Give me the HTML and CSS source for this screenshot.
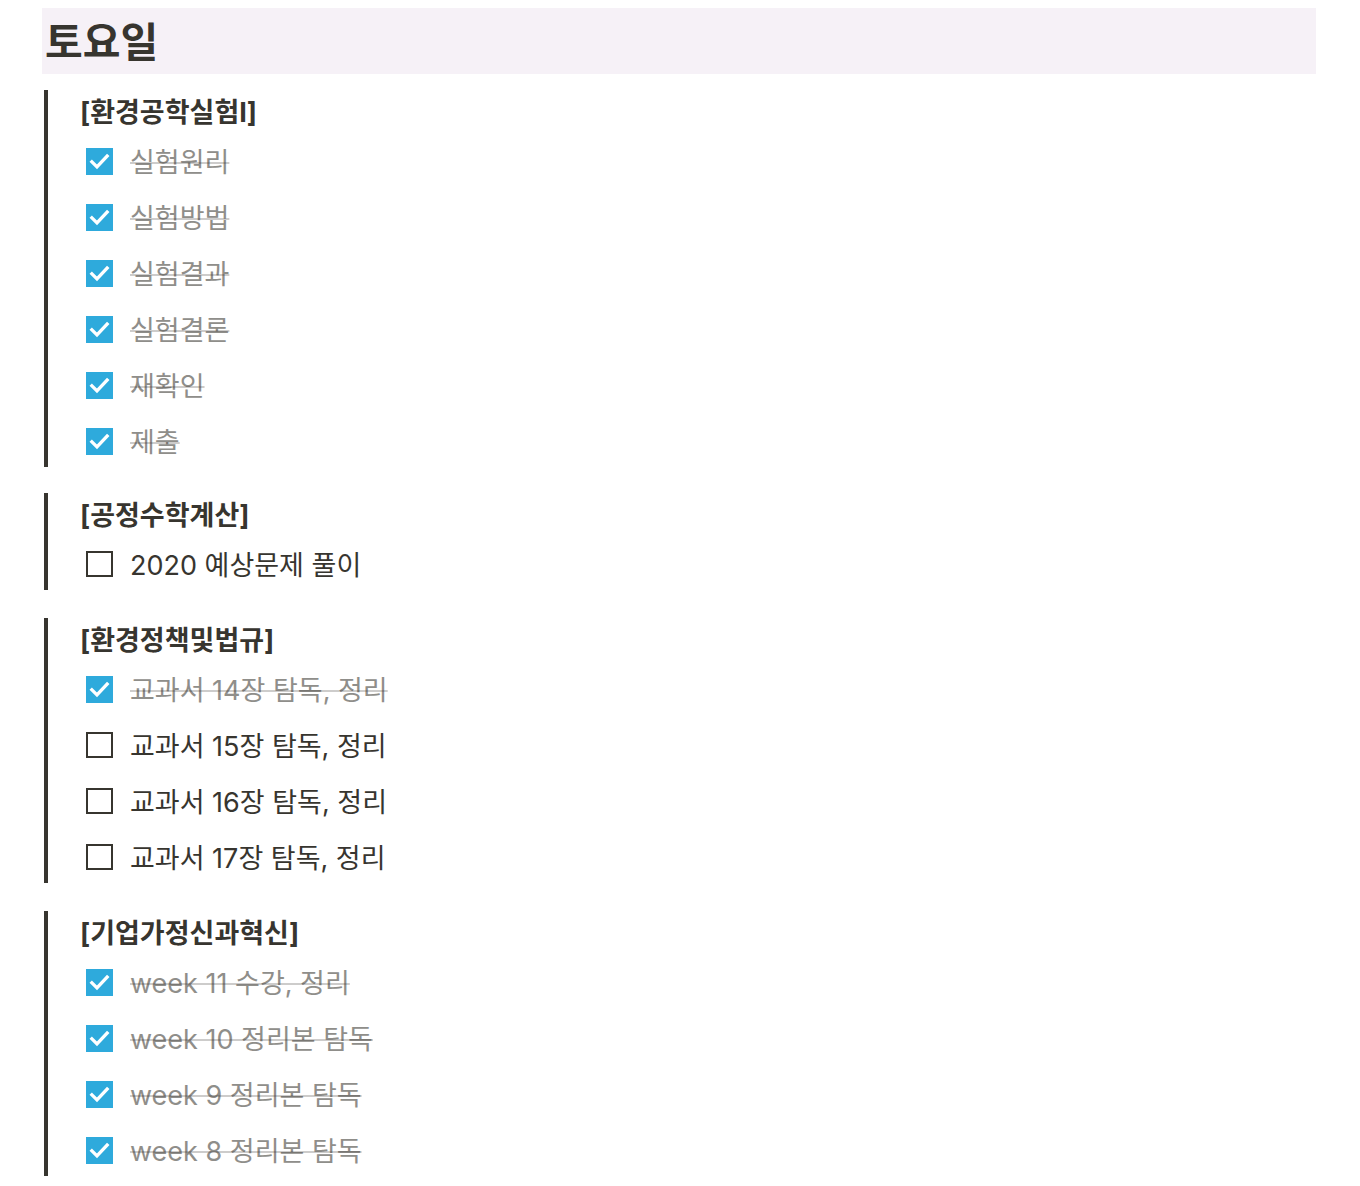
FILE: index.html
```html
<!DOCTYPE html>
<html lang="ko">
<head>
    <meta charset="UTF-8">
    <meta name="viewport" content="width=device-width, initial-scale=1.0">
    <title>토요일</title>
    <link rel="stylesheet" href="styles.css">
</head>
<body>

    <div id="root">
        <h1 class="day">토요일</h1>

        <div class="block">
            <div class="subject">[환경공학실험I]</div>
            <div class="todo done"><span class="box"><svg viewBox="0 0 16 16"><path d="M3.5 8.2l3 3 6-6.4"/></svg></span><span class="text">실험원리</span></div>
            <div class="todo done"><span class="box"><svg viewBox="0 0 16 16"><path d="M3.5 8.2l3 3 6-6.4"/></svg></span><span class="text">실험방법</span></div>
            <div class="todo done"><span class="box"><svg viewBox="0 0 16 16"><path d="M3.5 8.2l3 3 6-6.4"/></svg></span><span class="text">실험결과</span></div>
            <div class="todo done"><span class="box"><svg viewBox="0 0 16 16"><path d="M3.5 8.2l3 3 6-6.4"/></svg></span><span class="text">실험결론</span></div>
            <div class="todo done"><span class="box"><svg viewBox="0 0 16 16"><path d="M3.5 8.2l3 3 6-6.4"/></svg></span><span class="text">재확인</span></div>
            <div class="todo done"><span class="box"><svg viewBox="0 0 16 16"><path d="M3.5 8.2l3 3 6-6.4"/></svg></span><span class="text">제출</span></div>
        </div>

        <div class="block">
            <div class="subject">[공정수학계산]</div>
            <div class="todo"><span class="box"></span><span class="text">2020 예상문제 풀이</span></div>
        </div>

        <div class="block">
            <div class="subject">[환경정책및법규]</div>
            <div class="todo done"><span class="box"><svg viewBox="0 0 16 16"><path d="M3.5 8.2l3 3 6-6.4"/></svg></span><span class="text">교과서 14장 탐독, 정리</span></div>
            <div class="todo"><span class="box"></span><span class="text">교과서 15장 탐독, 정리</span></div>
            <div class="todo"><span class="box"></span><span class="text">교과서 16장 탐독, 정리</span></div>
            <div class="todo"><span class="box"></span><span class="text">교과서 17장 탐독, 정리</span></div>
        </div>

        <div class="block">
            <div class="subject">[기업가정신과혁신]</div>
            <div class="todo done"><span class="box"><svg viewBox="0 0 16 16"><path d="M3.5 8.2l3 3 6-6.4"/></svg></span><span class="text">week 11 수강, 정리</span></div>
            <div class="todo done"><span class="box"><svg viewBox="0 0 16 16"><path d="M3.5 8.2l3 3 6-6.4"/></svg></span><span class="text">week 10 정리본 탐독</span></div>
            <div class="todo done"><span class="box"><svg viewBox="0 0 16 16"><path d="M3.5 8.2l3 3 6-6.4"/></svg></span><span class="text">week 9 정리본 탐독</span></div>
            <div class="todo done"><span class="box"><svg viewBox="0 0 16 16"><path d="M3.5 8.2l3 3 6-6.4"/></svg></span><span class="text">week 8 정리본 탐독</span></div>
        </div>
    </div>

</body>
</html>
```

FILE: styles.css
```css
body {
    margin: 0;
    padding: 8px 0 0;
    font-family: Inter, "Noto Sans CJK KR", sans-serif;
    color: #37352f;
    background: #fff;
}

#root {
    width: 1274px;
    margin-left: 42px;
}

.day {
    margin: 0;
    height: 66px;
    display: flex;
    align-items: center;
    padding-left: 3px;
    padding-top: 3px;
    box-sizing: border-box;
    background: #f6f1f7;
    font-size: 41px;
    font-weight: 700;
    line-height: 1;
}

.block {
    margin: 16px 0 0 2px;
    border-left: 4px solid #37352f;
    padding-left: 32px;
    display: flex;
    flex-direction: column; /* 세로 배치 */
    gap: 4px;
}
.block + .block {
    margin-top: 26px;
}
.block + .block + .block {
    margin-top: 28px;
}

.subject {
    height: 41px;
    padding-top: 3px;
    box-sizing: border-box;
    display: flex;
    align-items: center;
    font-size: 27px;
    font-weight: 700;
    line-height: 1;
}

.todo {
    height: 52px;
    display: flex;
    align-items: center;
    padding-left: 6px;
}

.box {
    width: 27px;
    height: 26px;
    box-sizing: border-box;
    border: 2.5px solid #37352f;
    margin-right: 17px;
    flex-shrink: 0;
    display: flex;
}
.box svg {
    width: 100%;
    height: 100%;
    fill: none;
    stroke: #fff;
    stroke-width: 2;
    stroke-linecap: square;
}

.text {
    font-size: 27px;
    line-height: 1;
    padding-top: 3px;
}

.done .box {
    border: none;
    background: #2eaadc;
    height: 27px;
}
.done .text {
    color: #8f8e8a;
    text-decoration: line-through;
    text-decoration-color: rgba(55, 53, 47, 0.25);
}
```
